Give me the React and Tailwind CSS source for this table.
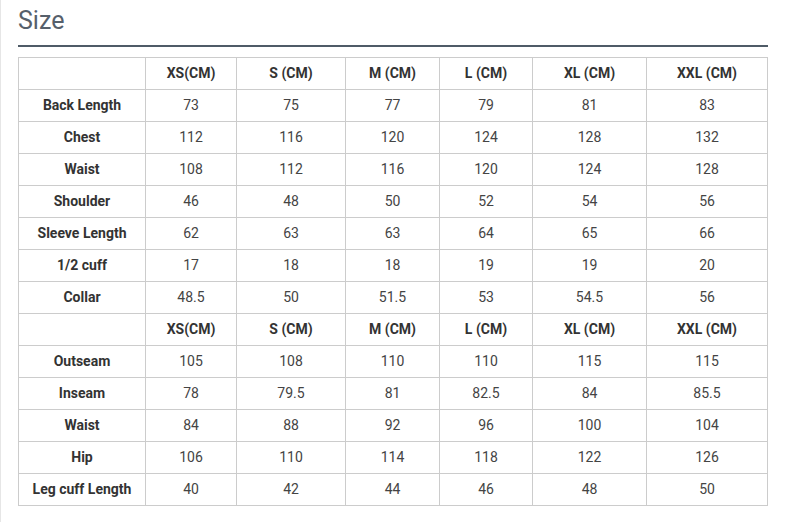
import React from 'react';

const cols = ['XS(CM)', 'S (CM)', 'M (CM)', 'L (CM)', 'XL (CM)', 'XXL (CM)'];

const top = [
    ['Back Length', 73, 75, 77, 79, 81, 83],
    ['Chest', 112, 116, 120, 124, 128, 132],
    ['Waist', 108, 112, 116, 120, 124, 128],
    ['Shoulder', 46, 48, 50, 52, 54, 56],
    ['Sleeve Length', 62, 63, 63, 64, 65, 66],
    ['1/2 cuff', 17, 18, 18, 19, 19, 20],
    ['Collar', 48.5, 50, 51.5, 53, 54.5, 56],
];

const bottom = [
    ['Outseam', 105, 108, 110, 110, 115, 115],
    ['Inseam', 78, 79.5, 81, 82.5, 84, 85.5],
    ['Waist', 84, 88, 92, 96, 100, 104],
    ['Hip', 106, 110, 114, 118, 122, 126],
    ['Leg cuff Length', 40, 42, 44, 46, 48, 50],
];

const widths = ['w-[127px]', 'w-[91px]', 'w-[109px]', 'w-[94px]', 'w-[93px]', 'w-[114px]', 'w-[121px]'];

function HeadRow() {
    return (
        <tr className="h-[32px]">
            <td className="border border-[#cccccc]"></td>
            {cols.map(c => (
                <td key={c} className="border border-[#cccccc] font-bold text-[#333333]">{c}</td>
            ))}
        </tr>
    );
}

function DataRow({ row }) {
    return (
        <tr className="h-[32px]">
            <td className="border border-[#cccccc] font-bold text-[#333333]">{row[0]}</td>
            {row.slice(1).map((v, i) => (
                <td key={i} className="border border-[#cccccc] text-[#444444]">{v}</td>
            ))}
        </tr>
    );
}

export default function App() {
    return (
        <div className="w-[795px] h-[522px] bg-white border-l border-[#e6e6e6] overflow-hidden" style={{ fontFamily: 'Roboto, "Liberation Sans", sans-serif' }}>
            <div className="pl-[17px] pr-[27px] pt-[6px]">
                <h2 className="text-[25px] leading-[30px] text-[#56606b] font-normal">Size</h2>
                <div className="mt-[9px] h-[2px] bg-[#4f5b67]"></div>
                <table className="mt-[10px] w-[750px] border-collapse table-fixed text-[14px] text-center">
                    <colgroup>
                        {widths.map((w, i) => <col key={i} className={w} />)}
                    </colgroup>
                    <tbody>
                        <HeadRow />
                        {top.map((r, i) => <DataRow key={'t' + i} row={r} />)}
                        <HeadRow />
                        {bottom.map((r, i) => <DataRow key={'b' + i} row={r} />)}
                    </tbody>
                </table>
            </div>
        </div>
    );
}
